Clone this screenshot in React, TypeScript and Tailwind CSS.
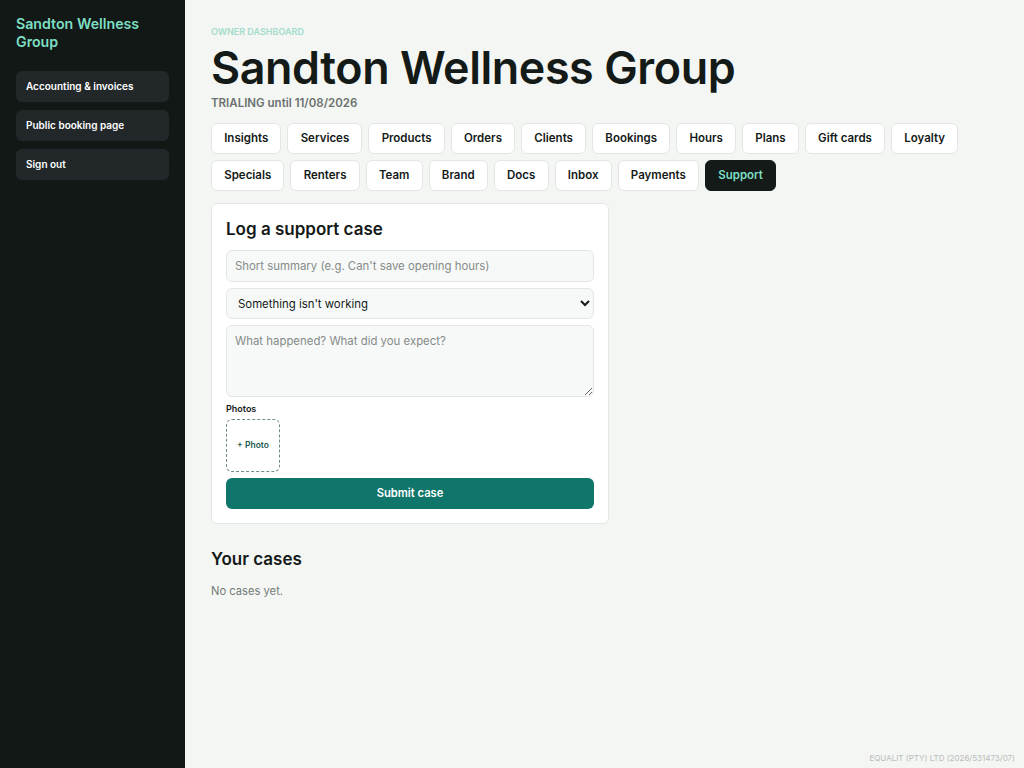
const tabs = [
  "Insights",
  "Services",
  "Products",
  "Orders",
  "Clients",
  "Bookings",
  "Hours",
  "Plans",
  "Gift cards",
  "Loyalty",
  "Specials",
  "Renters",
  "Team",
  "Brand",
  "Docs",
  "Inbox",
  "Payments",
  "Support",
];

const sideLinks = ["Accounting & invoices", "Public booking page", "Sign out"];

export default function App() {
  return (
    <div
      className="flex min-h-screen bg-[#f4f6f3] text-[#141a18]"
      style={{ fontFamily: "Inter, 'Noto Sans', sans-serif" }}
    >
      {/* sidebar */}
      <aside className="w-[185px] shrink-0 bg-[#121816] px-4 pt-[15px]">
        <div className="text-[14.2px] font-semibold leading-[18px] text-[#7ddfc3]">
          Sandton Wellness Group
        </div>
        <nav className="mt-[20px] flex flex-col gap-2">
          {sideLinks.map((l) => (
            <div
              key={l}
              className="flex h-[31px] items-center rounded-md bg-[#22282a] px-[10px] text-[10px] font-semibold text-white"
            >
              {l}
            </div>
          ))}
        </nav>
      </aside>

      {/* main */}
      <main className="relative flex-1 px-[26px] pt-[26px]">
        <div className="text-[9px] font-semibold uppercase leading-[11px] text-[#a3dccb]">
          Owner dashboard
        </div>
        <h1 className="mt-[4px] text-[44.8px] font-semibold leading-[54px] tracking-[-0.4px]">
          Sandton Wellness Group
        </h1>
        <div className="text-[11.5px] font-semibold leading-[16px] text-[#6b716f]">
          TRIALING until 11/08/2026
        </div>

        <div className="mt-[12px] flex flex-wrap gap-[6px]">
          {tabs.map((t) => (
            <div
              key={t}
              className={
                t === "Support"
                  ? "flex h-[31px] items-center rounded-md border border-[#141a18] bg-[#141a18] px-[12.2px] text-[11.5px] font-semibold text-[#7ddfc3]"
                  : "flex h-[31px] items-center rounded-md border border-[#e3e7e3] bg-white px-[12.2px] text-[11.5px] font-semibold text-[#141a18]"
              }
            >
              {t}
            </div>
          ))}
        </div>

        <section className="mt-[12px] w-[398px] rounded-md border border-[#e3e7e3] bg-white px-[14px] pb-[14px] pt-[14px]">
          <h2 className="text-[17px] font-semibold leading-[22px]">Log a support case</h2>
          <div className="mt-[10px] flex flex-col gap-[6px]">
            <input
              placeholder="Short summary (e.g. Can't save opening hours)"
              className="h-[32px] rounded-md border border-[#e3e7e3] bg-[#f7f9f8] px-[8px] text-[11.4px] text-[#141a18] placeholder:text-[#858b88] outline-none"
            />
            <select className="h-[31px] rounded-md border border-[#e3e7e3] bg-[#f7f9f8] px-[7px] text-[11.4px] text-[#141a18] outline-none">
              <option>Something isn't working</option>
            </select>
            <textarea
              placeholder="What happened? What did you expect?"
              className="h-[72px] rounded-md border border-[#e3e7e3] bg-[#f7f9f8] px-[8px] py-[7px] text-[11.4px] text-[#141a18] placeholder:text-[#858b88] outline-none"
            />
          </div>
          <div className="mt-[6px] text-[9px] font-semibold leading-[12px]">Photos</div>
          <div className="mt-[4px] flex h-[53px] w-[54px] items-center justify-center rounded-md border border-dashed border-[#6f8a84] text-[8.5px] font-semibold text-[#1f5a50]">
            + Photo
          </div>
          <button className="mt-[6px] flex h-[31px] w-full items-center justify-center rounded-md bg-[#10766b] text-[11.2px] font-semibold text-white">
            Submit case
          </button>
        </section>

        <h2 className="mt-[24px] text-[17px] font-semibold leading-[22px]">Your cases</h2>
        <p className="mt-[13px] text-[11.2px] text-[#747a77]">No cases yet.</p>

        <div className="absolute bottom-[4px] right-[9px] text-[8px] text-[#b9bdbb]">
          EQUALIT (PTY) LTD (2026/531473/07)
        </div>
      </main>
    </div>
  );
}
